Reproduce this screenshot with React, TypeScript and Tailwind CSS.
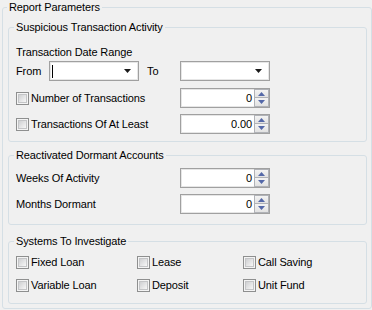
import React from "react";

function Check({ label }: { label: string }) {
  return (
    <div className="flex items-center h-[13px]">
      <span className="w-[13px] h-[13px] shrink-0 border border-[#8e8f8f] bg-[#f4f4f4] p-[1px] flex">
        <span className="flex-1 bg-linear-to-br from-[#cfd0d2] to-[#f7f7f7] border border-[#c4c5c7]" />
      </span>
      <span className="ml-[2px] whitespace-nowrap">{label}</span>
    </div>
  );
}

function Numeric({ value }: { value: string }) {
  return (
    <div className="w-[90px] h-[20px] border border-[#a0a0a0] shadow-[inset_0_0_0_1px_#e6e6e6] bg-white flex items-center shrink-0">
      <span className="flex-1 text-right pr-[2px] leading-[13px]">{value}</span>
      <div className="flex flex-col w-[15px] h-[18px]">
        <div className="h-[9px] border border-[#b0b2b7] bg-linear-to-b from-[#f4f4f4] to-[#e2e2e2] flex items-center justify-center">
          <svg width="7" height="4" viewBox="0 0 7 4">
            <polygon points="3.5,0 7,4 0,4" fill="#5468a8" />
          </svg>
        </div>
        <div className="h-[9px] border border-t-0 border-[#b0b2b7] bg-linear-to-b from-[#f4f4f4] to-[#e2e2e2] flex items-center justify-center">
          <svg width="7" height="4" viewBox="0 0 7 4">
            <polygon points="0,0 7,0 3.5,4" fill="#5468a8" />
          </svg>
        </div>
      </div>
    </div>
  );
}

function Combo({ caret }: { caret?: boolean }) {
  return (
    <div className="relative w-[90px] h-[20px] border border-[#a0a0a0] shadow-[inset_0_0_0_1px_#e6e6e6] bg-white flex items-center shrink-0">
      {caret && <span className="absolute left-[2px] top-[3px] w-[1px] h-[13px] bg-black" />}
      <svg className="absolute right-[7px] top-[7px]" width="7" height="4" viewBox="0 0 7 4">
        <polygon points="0,0 7,0 3.5,4" fill="#1a1a1a" />
      </svg>
    </div>
  );
}

function Group({
  title,
  titleLeft,
  className,
  children,
}: {
  title: string;
  titleLeft: string;
  className: string;
  children: React.ReactNode;
}) {
  return (
    <div className={"relative border border-[#d5dfe5] rounded-[3px] " + className}>
      <span className={"absolute top-[-7px] px-[2px] bg-[#f0f0f0] leading-[13px] whitespace-nowrap " + titleLeft}>
        {title}
      </span>
      {children}
    </div>
  );
}

export default function App() {
  return (
    <div
      className="w-[372px] h-[310px] bg-[#f0f0f0] pt-[7px] pl-[2px] text-[11px] leading-[13px] tracking-[-0.12px] text-black overflow-hidden"
      style={{ fontFamily: '"Liberation Sans", Arial, sans-serif' }}
    >
      <Group title="Report Parameters" titleLeft="left-[4px]" className="w-[370px] h-[302px] pt-[19px] pl-[5px] pb-[4px]">
        <div className="flex flex-col w-[359px]">
          <Group title="Suspicious Transaction Activity" titleLeft="left-[5px]" className="pt-[18px] pl-[7px] pb-[7px]">
            <div className="leading-[13px] h-[13px]">Transaction Date Range</div>
            <div className="flex items-center mt-[2px]">
              <span className="w-[33px]">From</span>
              <Combo caret />
              <span className="w-[33px] ml-[8px]">To</span>
              <Combo />
            </div>
            <div className="flex items-center mt-[7px]">
              <div className="w-[164px]">
                <Check label="Number of Transactions" />
              </div>
              <Numeric value="0" />
            </div>
            <div className="flex items-center mt-[6px]">
              <div className="w-[164px]">
                <Check label="Transactions Of At Least" />
              </div>
              <Numeric value="0.00" />
            </div>
          </Group>

          <Group title="Reactivated Dormant Accounts" titleLeft="left-[5px]" className="mt-[13px] pt-[12px] pl-[7px] pb-[10px]">
            <div className="flex items-center">
              <span className="w-[164px]">Weeks Of Activity</span>
              <Numeric value="0" />
            </div>
            <div className="flex items-center mt-[6px]">
              <span className="w-[164px]">Months Dormant</span>
              <Numeric value="0" />
            </div>
          </Group>

          <Group title="Systems To Investigate" titleLeft="left-[5px]" className="mt-[16px] pt-[14px] pl-[7px] pb-[11px]">
            <div className="flex">
              <div className="w-[121px]"><Check label="Fixed Loan" /></div>
              <div className="w-[106px]"><Check label="Lease" /></div>
              <div><Check label="Call Saving" /></div>
            </div>
            <div className="flex mt-[10px]">
              <div className="w-[121px]"><Check label="Variable Loan" /></div>
              <div className="w-[106px]"><Check label="Deposit" /></div>
              <div><Check label="Unit Fund" /></div>
            </div>
          </Group>
        </div>
      </Group>
    </div>
  );
}
